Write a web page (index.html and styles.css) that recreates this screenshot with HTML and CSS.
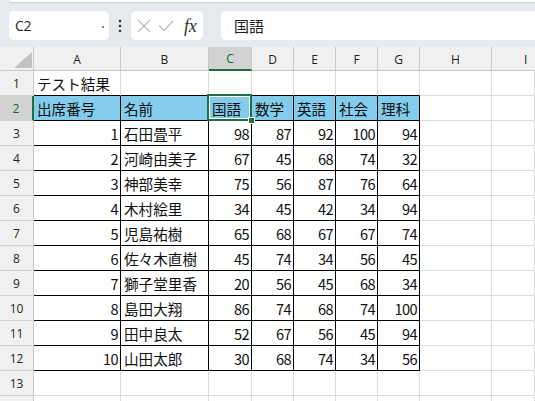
FILE: index.html
```html
<!DOCTYPE html>
<html lang="ja">
<head>
<meta charset="utf-8">
<link rel="stylesheet" href="styles.css">
</head>
<body>
<div class="toolbar">
  <div class="ribbon-edge"></div>
  <div class="bar">
    <div class="namebox"><span class="nb-text">C2</span><span class="nb-drop"></span></div>
    <div class="dots">
      <svg width="4" height="14" viewBox="0 0 4 14"><circle cx="2" cy="2" r="1.3" fill="#333"/><circle cx="2" cy="7" r="1.3" fill="#333"/><circle cx="2" cy="12" r="1.3" fill="#333"/></svg>
    </div>
    <div class="fxbox">
      <svg class="ico" width="14" height="14" viewBox="0 0 14 14"><path d="M1 1 L13 13 M13 1 L1 13" stroke="#b8b8b8" stroke-width="1.1" fill="none"/></svg>
      <svg class="ico" width="16" height="14" viewBox="0 0 16 14"><path d="M1 6.5 L6 11.5 L15 2" stroke="#b8b8b8" stroke-width="1.1" fill="none"/></svg>
      <span class="fx">fx</span>
    </div>
    <div class="formula">国語</div>
  </div>
</div>
<div class="sheet">
  <div class="corner"><span class="tri"></span></div>
  <div class="ch">A</div><div class="ch">B</div><div class="ch selc">C</div><div class="ch">D</div><div class="ch">E</div><div class="ch">F</div><div class="ch">G</div><div class="ch">H</div><div class="ch ch-i">I</div>

  <div class="rh">1</div>
  <div class="c top">テスト結果</div><div class="c top"></div><div class="c top"></div><div class="c top"></div><div class="c top"></div><div class="c top"></div><div class="c top"></div><div class="c"></div><div class="c"></div>

  <div class="rh selr">2</div>
  <div class="c t hd">出席番号</div><div class="c t hd">名前</div><div class="c t hd active">国語<span class="handle"></span></div><div class="c t hd">数学</div><div class="c t hd">英語</div><div class="c t hd">社会</div><div class="c t hd">理科</div><div class="c"></div><div class="c"></div>

  <div class="rh">3</div>
  <div class="c t n">1</div><div class="c t">石田畳平</div><div class="c t n">98</div><div class="c t n">87</div><div class="c t n">92</div><div class="c t n">100</div><div class="c t n">94</div><div class="c"></div><div class="c"></div>

  <div class="rh">4</div>
  <div class="c t n">2</div><div class="c t">河崎由美子</div><div class="c t n">67</div><div class="c t n">45</div><div class="c t n">68</div><div class="c t n">74</div><div class="c t n">32</div><div class="c"></div><div class="c"></div>

  <div class="rh">5</div>
  <div class="c t n">3</div><div class="c t">神部美幸</div><div class="c t n">75</div><div class="c t n">56</div><div class="c t n">87</div><div class="c t n">76</div><div class="c t n">64</div><div class="c"></div><div class="c"></div>

  <div class="rh">6</div>
  <div class="c t n">4</div><div class="c t">木村絵里</div><div class="c t n">34</div><div class="c t n">45</div><div class="c t n">42</div><div class="c t n">34</div><div class="c t n">94</div><div class="c"></div><div class="c"></div>

  <div class="rh">7</div>
  <div class="c t n">5</div><div class="c t">児島祐樹</div><div class="c t n">65</div><div class="c t n">68</div><div class="c t n">67</div><div class="c t n">67</div><div class="c t n">74</div><div class="c"></div><div class="c"></div>

  <div class="rh">8</div>
  <div class="c t n">6</div><div class="c t">佐々木直樹</div><div class="c t n">45</div><div class="c t n">74</div><div class="c t n">34</div><div class="c t n">56</div><div class="c t n">45</div><div class="c"></div><div class="c"></div>

  <div class="rh">9</div>
  <div class="c t n">7</div><div class="c t">獅子堂里香</div><div class="c t n">20</div><div class="c t n">56</div><div class="c t n">45</div><div class="c t n">68</div><div class="c t n">34</div><div class="c"></div><div class="c"></div>

  <div class="rh">10</div>
  <div class="c t n">8</div><div class="c t">島田大翔</div><div class="c t n">86</div><div class="c t n">74</div><div class="c t n">68</div><div class="c t n">74</div><div class="c t n">100</div><div class="c"></div><div class="c"></div>

  <div class="rh">11</div>
  <div class="c t n">9</div><div class="c t">田中良太</div><div class="c t n">52</div><div class="c t n">67</div><div class="c t n">56</div><div class="c t n">45</div><div class="c t n">94</div><div class="c"></div><div class="c"></div>

  <div class="rh">12</div>
  <div class="c t n">10</div><div class="c t">山田太郎</div><div class="c t n">30</div><div class="c t n">68</div><div class="c t n">74</div><div class="c t n">34</div><div class="c t n">56</div><div class="c"></div><div class="c"></div>

  <div class="rh">13</div>
  <div class="c"></div><div class="c"></div><div class="c"></div><div class="c"></div><div class="c"></div><div class="c"></div><div class="c"></div><div class="c"></div><div class="c"></div>

  <div class="rh"></div>
  <div class="c"></div><div class="c"></div><div class="c"></div><div class="c"></div><div class="c"></div><div class="c"></div><div class="c"></div><div class="c"></div><div class="c"></div>
</div>
</body>
</html>
```

FILE: styles.css
```css
html, body {
  margin: 0;
  padding: 0;
  background: #ffffff;
  overflow: hidden;
}
body {
  width: 535px;
  height: 401px;
  font-family: "Noto Sans CJK JP", "Noto Sans", sans-serif;
}

/* ---------- formula bar ---------- */
.toolbar {
  height: 47px;
  background: #e6e9ed;
  display: flex;
  flex-direction: column;
  box-sizing: border-box;
}
.ribbon-edge {
  height: 2px;
  margin-left: 10px;
  background: #ffffff;
  border-bottom-left-radius: 6px;
  box-shadow: 0 1px 1px rgba(0, 0, 0, 0.10);
}
.bar {
  display: flex;
  align-items: center;
  height: 29px;
  margin-top: 9px;
}
.namebox {
  margin-left: 9px;
  width: 100px;
  height: 29px;
  box-sizing: border-box;
  background: #ffffff;
  border-radius: 5px;
  display: flex;
  align-items: center;
  justify-content: space-between;
  padding: 0 5px 0 6px;
  font-family: "Open Sans", "Noto Sans", sans-serif;
  font-size: 14px;
  color: #1f1f1f;
}
.nb-text {
  letter-spacing: -0.2px;
}
.nb-drop {
  width: 2px;
  height: 2px;
  border-radius: 1px;
  background: #555;
  margin-top: 2px;
}
.dots {
  width: 22px;
  display: flex;
  justify-content: center;
  align-items: center;
}
.fxbox {
  width: 72px;
  height: 29px;
  box-sizing: border-box;
  background: #ffffff;
  border-radius: 5px;
  display: flex;
  align-items: center;
  padding-left: 6px;
  gap: 7px;
}
.ico {
  display: block;
}
.fx {
  font-family: "Liberation Serif", serif;
  font-style: italic;
  font-size: 18px;
  color: #333333;
  margin-left: 3px;
  letter-spacing: -0.3px;
  line-height: 1;
}
.formula {
  flex: 1;
  height: 29px;
  margin-left: 18px;
  background: #ffffff;
  border-radius: 5px 0 0 5px;
  display: flex;
  align-items: center;
  padding-left: 13px;
  font-size: 15px;
  color: #1f1f1f;
}

/* ---------- sheet grid ---------- */
.sheet {
  display: grid;
  grid-template-columns: 34px 87px 88px 43px 42px 42px 42px 42px 72px 1fr;
  grid-template-rows: 24px repeat(14, 25px);
}
.corner {
  background: #f0f0f0;
  border-right: 1px solid #c8c8c8;
  border-bottom: 1px solid #c8c8c8;
  box-sizing: border-box;
  display: flex;
  align-items: flex-end;
  justify-content: flex-end;
  padding: 0 1px 2px 0;
}
.tri {
  width: 0;
  height: 0;
  border-style: solid;
  border-width: 0 0 16px 18px;
  border-color: transparent transparent #c2c2c2 transparent;
}
.ch {
  background: #f0f0f0;
  border-right: 1px solid #c8c8c8;
  border-bottom: 1px solid #c8c8c8;
  box-sizing: border-box;
  display: flex;
  align-items: center;
  justify-content: center;
  font-family: "Open Sans", "Noto Sans", sans-serif;
  font-size: 12px;
  color: #1f1f1f;
  padding-top: 1px;
}
.ch-i {
  justify-content: flex-start;
  padding-left: 32px;
  border-right: none;
}
.ch.selc {
  background: #d2d2d2;
  color: #0e6a36;
  border-bottom: 2px solid #1e7145;
}
.rh {
  background: #f0f0f0;
  border-right: 1px solid #c8c8c8;
  border-bottom: 1px solid #d4d4d4;
  box-sizing: border-box;
  display: flex;
  align-items: center;
  justify-content: center;
  font-family: "Open Sans", "Noto Sans", sans-serif;
  font-size: 12px;
  color: #1f1f1f;
}
.rh.selr {
  background: #d2d2d2;
  color: #0e6a36;
  border-right: 2px solid #1e7145;
}
.c {
  border-right: 1px solid #dcdcdc;
  border-bottom: 1px solid #dcdcdc;
  box-sizing: border-box;
  display: flex;
  align-items: center;
  padding: 0 3px;
  font-size: 14.6px;
  color: #111111;
  white-space: nowrap;
  overflow: visible;
}
.c.top {
  border-bottom-color: #000000;
}
.c.t {
  border-right-color: #000000;
  border-bottom-color: #000000;
}
.c.hd {
  background: #83ccec;
}
.c.n {
  justify-content: flex-end;
  letter-spacing: -0.6px;
  padding-right: 2px;
}
.c.active {
  position: relative;
  z-index: 2;
}
.c.active::after {
  content: "";
  position: absolute;
  left: -2px;
  top: -2px;
  right: -1px;
  bottom: -1px;
  border: 2px solid #1e7145;
  box-shadow: inset 0 0 0 1px #ffffff;
}
.handle {
  position: absolute;
  right: -4px;
  bottom: -4px;
  width: 5px;
  height: 5px;
  background: #1e7145;
  border: 1px solid #ffffff;
  z-index: 3;
}
```
